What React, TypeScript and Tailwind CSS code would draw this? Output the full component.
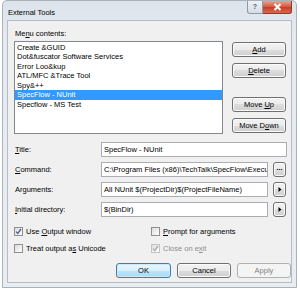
import React from "react";
import clsx from "clsx";

const items = [
	"Create &GUID",
	"Dot&fuscator Software Services",
	"Error Loo&kup",
	"ATL/MFC &Trace Tool",
	"Spy&++",
	"SpecFlow - NUnit",
	"Specflow - MS Test",
];

// win7 style push button
const Btn = ({
	children,
	className,
	variant = "normal",
}: {
	children: React.ReactNode;
	className?: string;
	variant?: "normal" | "default" | "disabled";
}) => (
	<div
		className={clsx(
			"flex h-[15px] items-center justify-center rounded-[3px] border leading-none",
			{
				"border-[#707070] bg-[linear-gradient(#f2f2f2,#ebebeb_50%,#dddddd_50%,#cfcfcf)] text-black shadow-[inset_0_0_0_1px_#fbfbfb]":
					variant === "normal",
				"border-[#3c7fb1] bg-[linear-gradient(#eaf6fd,#d9f0fc_50%,#bee6fd_50%,#a7d9f5)] text-black shadow-[inset_0_0_0_1px_#cdeafc]":
					variant === "default",
				"border-[#adb2b5] bg-[#f4f4f4] text-[#838383]": variant === "disabled",
			},
			className,
		)}
	>
		<span className="whitespace-pre">{children}</span>
	</div>
);

const Input = ({ value, className }: { value: string; className?: string }) => (
	<div
		className={clsx(
			"flex h-[15px] items-center overflow-hidden whitespace-nowrap border border-[#abadb3] bg-white pl-[2px] leading-none",
			className,
		)}
	>
		{value}
	</div>
);

const Check = ({
	checked,
	disabled,
	children,
}: {
	checked?: boolean;
	disabled?: boolean;
	children: React.ReactNode;
}) => (
	<div className={clsx("flex h-[10px] items-center gap-[3px]", disabled && "text-[#8d8d8d]")}>
		<div
			className={clsx(
				"flex h-[9px] w-[9px] items-center justify-center border bg-[linear-gradient(135deg,#dcdcdc,#ffffff)]",
				disabled ? "border-[#c4c4c4]" : "border-[#8e8f8f]",
			)}
		>
			{checked && (
				<svg width="7" height="7" viewBox="0 0 7 7">
					<path
						d="M1 3.6 L2.8 5.4 L6 1"
						fill="none"
						stroke={disabled ? "#a8a8a8" : "#4a5f97"}
						strokeWidth="1.3"
					/>
				</svg>
			)}
		</div>
		<span>{children}</span>
	</div>
);

const Row = ({ label, children }: { label: React.ReactNode; children: React.ReactNode }) => (
	<div className="flex h-[15px] items-center">
		<div className="w-[87px] pl-[1px]">{label}</div>
		{children}
	</div>
);

const SmallBtn = ({ children }: { children: React.ReactNode }) => (
	<Btn className="ml-[5px] h-[15px] w-[13px] rounded-[2px]">{children}</Btn>
);

const Arrow = () => (
	<svg width="4" height="5" viewBox="0 0 4 5" className="block">
		<path d="M0.5 0 L3.5 2.5 L0.5 5 Z" fill="#000" />
	</svg>
);

export default function App() {
	return (
		<div className="h-[293px] w-[300px] bg-white font-['Liberation_Sans',Arial,sans-serif] text-[7.5px] text-black">
			{/* window frame */}
			<div className="ml-[2px] flex h-[288px] w-[295px] flex-col rounded-t-[5px] border border-[#a9b1ba] bg-[linear-gradient(#dce3eb,#e6ebf0_40px,#e9edf1)] px-[4px] pb-[4px]">
				{/* title bar */}
				<div className="flex h-[19px] items-start">
					<div className="pl-[1px] pt-[6px] text-black">External Tools</div>
					<div className="flex-1" />
					<div className="flex h-[13px]">
						<div className="flex w-[16px] items-center justify-center rounded-bl-[3px] border border-t-0 border-[#8f9aa6] bg-[linear-gradient(#eef2f6,#d6dde5)] text-[7px] font-bold text-[#59616b]">
							?
						</div>
						<div className="flex w-[29px] items-center justify-center rounded-br-[3px] border border-l-0 border-t-0 border-[#8a3a2f] bg-[linear-gradient(#e8a493,#d4563f_50%,#c43c24_50%,#d76a4f)]">
							<svg width="9" height="8" viewBox="0 0 9 8">
								<path d="M1.5 1 L7.5 7 M7.5 1 L1.5 7" stroke="#ffffff" strokeWidth="2" />
							</svg>
						</div>
					</div>
				</div>

				{/* client area */}
				<div className="flex h-[264px] flex-col border border-[#b4bcc6] bg-[#f0f0f0] pl-[6px] pt-[8px]">
					<div className="h-[10px] pl-[1px] leading-[10px]">
						Me<span className="underline">n</span>u contents:
					</div>
					<div className="mt-[2px] flex">
						<div className="h-[93px] w-[209px] border border-[#828790] bg-white pt-[1px]">
							{items.map((it, i) => (
								<div
									key={it}
									className={clsx(
										"h-[9.5px] whitespace-nowrap pl-[2px] leading-[9.5px]",
										i === 5 && "bg-[#3399ff] text-white",
									)}
								>
									{it}
								</div>
							))}
						</div>
						<div className="ml-[9px] flex w-[54px] flex-col pt-[1px]">
							<Btn>
								<span className="underline">A</span>dd
							</Btn>
							<Btn className="mt-[6px]">
								<span className="underline">D</span>elete
							</Btn>
							<Btn className="mt-[19px]">
								Move <span className="underline">U</span>p
							</Btn>
							<Btn className="mt-[6px]">
								Move D<span className="underline">o</span>wn
							</Btn>
						</div>
					</div>

					<div className="mt-[8px] flex flex-col gap-[5px]">
						<Row
							label={
								<>
									<span className="underline">T</span>itle:
								</>
							}
						>
							<Input value="SpecFlow - NUnit" className="w-[186px]" />
						</Row>
						<Row
							label={
								<>
									<span className="underline">C</span>ommand:
								</>
							}
						>
							<Input
								value="C:\Program Files (x86)\TechTalk\SpecFlow\Execu"
								className="w-[167px]"
							/>
							<SmallBtn>
								<span className="relative -top-[2px] text-[7px] font-bold">...</span>
							</SmallBtn>
						</Row>
						<Row
							label={
								<>
									Ar<span className="underline">g</span>uments:
								</>
							}
						>
							<Input value="All NUnit $(ProjectDir)$(ProjectFileName)" className="w-[167px]" />
							<SmallBtn>
								<Arrow />
							</SmallBtn>
						</Row>
						<Row
							label={
								<>
									<span className="underline">I</span>nitial directory:
								</>
							}
						>
							<Input value="$(BinDir)" className="w-[167px]" />
							<SmallBtn>
								<Arrow />
							</SmallBtn>
						</Row>
					</div>

					<div className="mt-[10px] flex flex-col gap-[7px]">
						<div className="flex">
							<div className="w-[137px]">
								<Check checked>
									Use <span className="underline">O</span>utput window
								</Check>
							</div>
							<Check>
								<span className="underline">P</span>rompt for arguments
							</Check>
						</div>
						<div className="flex">
							<div className="w-[137px]">
								<Check>
									Treat output a<span className="underline">s</span> Unicode
								</Check>
							</div>
							<Check checked disabled>
								Close on e<span className="underline">x</span>it
							</Check>
						</div>
					</div>

					<div className="mt-[9px] flex gap-[6px] pl-[102px]">
						<Btn variant="default" className="w-[55px]">
							OK
						</Btn>
						<Btn className="w-[54px]">Cancel</Btn>
						<Btn variant="disabled" className="w-[54px]">
							Apply
						</Btn>
					</div>
				</div>
			</div>
		</div>
	);
}
